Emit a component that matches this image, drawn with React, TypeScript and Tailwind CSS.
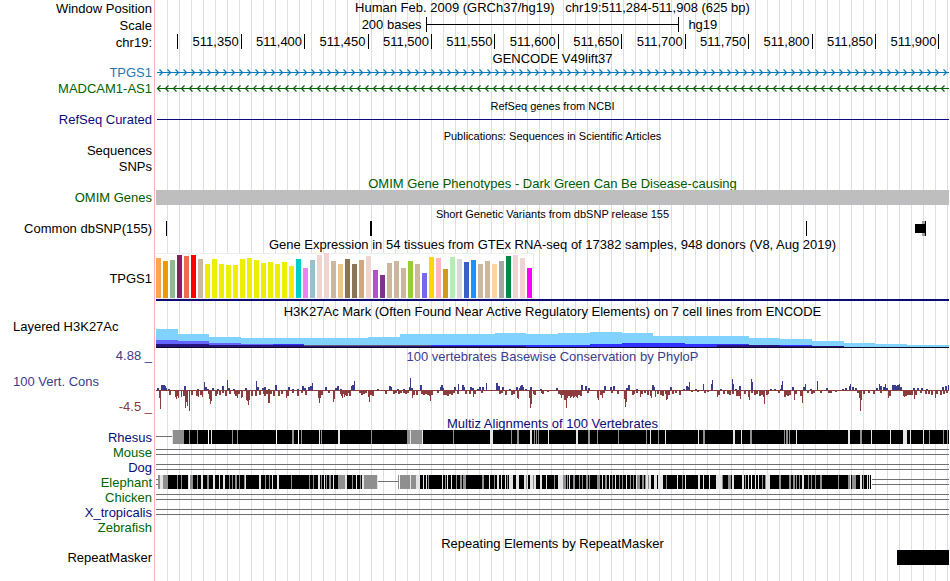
import type { ReactNode } from "react";
import { clsx } from "clsx";

type Span = [x: number, width: number, shade: "g" | "l" | "w"];

// Genome-wide drawing space: 625 bases laid over 793 units
const LANE_WIDTH = 793;

const RULER_TICKS = [
  "511,350", "511,400", "511,450", "511,500", "511,550", "511,600",
  "511,650", "511,700", "511,750", "511,800", "511,850", "511,900",
];

const TAN = "#cdb79e";
const ROSE = "#eed5d2";
const YELLOW = "#eeee00";

const TISSUE_HEIGHTS = [
  40, 37, 38, 43, 42, 43, 39, 34, 39, 34, 33, 33, 39, 40, 38, 35, 36, 34,
  36, 32, 39, 30, 38, 43, 45, 37, 34, 39, 34, 38, 42, 28, 23, 35, 37, 30,
  37, 34, 25, 41, 40, 29, 41, 39, 36, 38, 34, 37, 34, 37, 42, 43, 40, 30,
];

const TISSUE_COLORS = [
  "#ffa54f", "#ee9a00", "#8fbc8f", "#8b1c62", "#ee6a50", "#ff0000", TAN,
  YELLOW, YELLOW, YELLOW, YELLOW, YELLOW, YELLOW, YELLOW, YELLOW, YELLOW,
  YELLOW, YELLOW, YELLOW, YELLOW, "#00cdcd", "#ee82ee", "#9ac0cd", ROSE,
  ROSE, TAN, "#eec591", "#8b7355", "#8b7355", "#cdaa7d", ROSE, "#b452cd",
  "#7a378b", TAN, TAN, TAN, "#9acd32", TAN, "#7a67ee", "#ffd700", "#ffb6c1",
  "#cd9b1d", "#b4eeb4", "#d9d9d9", "#3a5fcd", "#1e90ff", TAN, TAN, "#ffd39b",
  "#a6a6a6", "#008b45", ROSE, ROSE, "#ff00ff",
];

// [start, height] steps, each one running up to the next start
const H3K_SKY = [
  [0, 19], [22, 14], [53, 11], [85, 10], [212, 11], [244, 14], [339, 15],
  [370, 14], [402, 15], [434, 16], [466, 15], [497, 12], [593, 10], [624, 9],
  [656, 7], [688, 5], [719, 4], [751, 3],
];
const H3K_VIOLET = [[0, 8], [22, 7], [53, 5], [85, 4], [117, 4], [148, 0]];
const H3K_BLUE = [
  [0, 0], [117, 4], [148, 3], [180, 0], [275, 3], [370, 3], [434, 4],
  [466, 5], [529, 4], [593, 3], [656, 0],
];
const H3K_DARK = [
  [0, 4], [53, 3], [148, 2], [370, 1], [561, 3], [624, 2], [688, 1],
];

// [position, score in px], positive scores rise above the axis
const CONSERVATION = [
  [1, 2], [5, 5], [6, 5], [7, 5], [8, 4], [9, 2], [12, 1], [28, 4], [41, 1],
  [48, 8], [49, 3], [51, 1], [56, 2], [61, 1], [66, 4], [71, 10], [72, 2],
  [77, 1], [89, 2], [100, 9], [101, 3], [106, 2], [108, 3], [112, 1], [119, 5],
  [132, 3], [136, 1], [141, 1], [146, 4], [148, 2], [152, 3], [154, 4],
  [155, 3], [156, 7], [169, 3], [179, 2], [181, 4], [184, 1], [195, 4],
  [196, 5], [198, 9], [221, 1], [233, 4], [234, 3], [241, 1], [247, 1],
  [253, 3], [254, 12], [255, 2], [264, 5], [284, 3], [285, 5], [286, 2],
  [298, 3], [302, 6], [306, 5], [307, 3], [314, 3], [316, 2], [321, 1],
  [323, 3], [326, 3], [330, 7], [340, 7], [341, 7], [342, 4], [346, 3],
  [353, 1], [360, 3], [363, 2], [364, 4], [365, 5], [366, 3], [369, 1],
  [374, 3], [384, 1], [400, 2], [425, 5], [429, 4], [432, 2], [448, 4],
  [454, 3], [457, 4], [470, 2], [472, 5], [480, 1], [496, 5], [497, 3],
  [514, 3], [527, 1], [530, 4], [531, 3], [533, 8], [539, 1], [547, 6],
  [555, 6], [556, 10], [564, 1], [576, 11], [577, 6], [579, 1], [583, 4],
  [595, 11], [596, 8], [614, 1], [618, 1], [624, 1], [625, 5], [626, 9],
  [636, 3], [647, 3], [649, 6], [654, 1], [661, 9], [670, 2], [686, 1],
  [689, 2], [693, 4], [694, 6], [696, 3], [699, 2], [720, 2], [723, 6],
  [724, 4], [727, 3], [729, 6], [730, 2], [736, 5], [737, 5], [738, 5],
  [740, 4], [741, 5], [742, 5], [743, 6], [744, 3], [757, 2], [761, 2],
  [765, 2], [770, 1], [786, 3], [789, 4], [792, 5],
  [3, -8], [4, -19], [13, -5], [19, -7], [20, -9], [21, -6], [22, -8],
  [25, -7], [27, -6], [29, -18], [30, -12], [31, -16], [33, -21], [35, -5],
  [40, -6], [42, -7], [44, -5], [46, -7], [52, -4], [53, -9], [54, -14],
  [55, -11], [59, -6], [60, -4], [63, -5], [66, -3], [69, -6], [73, -4],
  [78, -4], [79, -6], [80, -5], [81, -8], [82, -4], [85, -8], [86, -7],
  [90, -10], [91, -11], [92, -15], [93, -10], [95, -6], [99, -6], [103, -5],
  [107, -4], [108, -6], [110, -4], [112, -13], [113, -13], [114, -4],
  [117, -6], [122, -6], [125, -4], [130, -8], [131, -6], [136, -3], [141, -6],
  [145, -3], [149, -5], [162, -8], [163, -13], [164, -8], [165, -5],
  [172, -3], [177, -12], [178, -9], [184, -4], [185, -6], [186, -8], [187, -4],
  [188, -7], [189, -5], [190, -6], [192, -3], [193, -6], [203, -3], [205, -5],
  [207, -4], [209, -3], [212, -7], [213, -12], [214, -5], [216, -6],
  [229, -4], [237, -4], [239, -3], [242, -4], [244, -3], [247, -3], [249, -4],
  [251, -3], [256, -8], [257, -5], [260, -5], [265, -4], [267, -5], [269, -4],
  [271, -5], [273, -6], [274, -11], [275, -5], [281, -3], [287, -5],
  [289, -5], [291, -6], [293, -4], [295, -5], [297, -3], [301, -4],
  [309, -4], [313, -4], [317, -7], [318, -4], [325, -3], [343, -4],
  [345, -3], [349, -5], [355, -5], [357, -4], [361, -8], [362, -9],
  [373, -8], [374, -18], [375, -14], [377, -4], [378, -5], [385, -3],
  [386, -4], [391, -2], [402, -4], [404, -5], [405, -8], [406, -5],
  [408, -10], [409, -10], [410, -18], [411, -8], [412, -6], [414, -8],
  [415, -7], [416, -6], [417, -8], [418, -7], [419, -6], [420, -7],
  [421, -8], [422, -5], [424, -6], [431, -3], [441, -8], [442, -10],
  [444, -5], [446, -8], [447, -3], [455, -3], [461, -4], [468, -9],
  [469, -17], [470, -12], [476, -5], [477, -4], [480, -3], [484, -7],
  [485, -4], [488, -3], [491, -5], [494, -6], [495, -8], [499, -7],
  [501, -4], [504, -5], [506, -6], [509, -4], [510, -10], [511, -9],
  [512, -5], [516, -4], [519, -3], [523, -5], [535, -2], [541, -2],
  [548, -3], [551, -2], [561, -7], [562, -5], [567, -4], [571, -4],
  [573, -5], [576, -4], [580, -6], [582, -6], [584, -9], [588, -4],
  [592, -7], [593, -10], [595, -3], [598, -5], [600, -4], [603, -6],
  [605, -5], [607, -7], [608, -14], [610, -5], [611, -4], [622, -3],
  [628, -7], [629, -7], [630, -5], [631, -6], [633, -5], [638, -10],
  [639, -4], [644, -6], [646, -13], [651, -3], [655, -4], [657, -3],
  [664, -3], [672, -3], [674, -3], [679, -2], [701, -3], [703, -8],
  [704, -21], [705, -10], [707, -4], [712, -3], [717, -4], [724, -3],
  [732, -8], [733, -6], [747, -6], [748, -7], [749, -6], [750, -5],
  [751, -5], [752, -4], [753, -5], [754, -4], [755, -5], [758, -9],
  [759, -5], [764, -3], [769, -4], [772, -4], [775, -5], [779, -8],
  [780, -4], [784, -5], [787, -4], [790, -3],
];

const RHESUS: Span[] = [
  [16, 1, "l"], [17, 11, "g"], [33, 1, "g"], [41, 1, "g"], [52, 1, "w"],
  [55, 1, "l"], [76, 1, "g"], [81, 1, "g"], [120, 1, "w"], [136, 2, "g"],
  [142, 1, "w"], [145, 1, "g"], [163, 1, "l"], [165, 1, "g"], [182, 2, "l"],
  [215, 1, "g"], [251, 3, "g"], [254, 1, "l"], [255, 11, "g"], [266, 1, "l"],
  [297, 1, "g"], [334, 3, "l"], [355, 1, "g"], [361, 2, "g"], [374, 2, "l"],
  [378, 1, "g"], [380, 1, "g"], [382, 1, "g"], [392, 1, "l"], [420, 2, "l"],
  [432, 2, "g"], [441, 1, "g"], [462, 1, "g"], [490, 1, "g"], [494, 1, "l"],
  [502, 1, "g"], [509, 1, "l"], [542, 1, "l"], [547, 2, "g"], [577, 2, "l"],
  [585, 1, "l"], [594, 2, "g"], [628, 1, "g"], [630, 2, "g"], [633, 1, "g"],
  [640, 1, "l"], [692, 2, "l"], [704, 2, "g"], [715, 1, "l"], [734, 1, "l"],
  [747, 4, "l"], [754, 1, "l"], [767, 1, "l"], [773, 1, "g"], [787, 1, "g"],
  [791, 1, "g"],
];

const ELEPHANT: Span[] = [
  [2, 2, "g"], [4, 3, "l"], [7, 5, "g"], [21, 1, "g"], [25, 1, "g"],
  [32, 1, "l"], [33, 1, "w"], [34, 3, "g"], [41, 1, "g"], [45, 2, "l"],
  [51, 2, "g"], [57, 2, "l"], [63, 1, "l"], [67, 2, "l"], [73, 1, "g"],
  [76, 1, "g"], [79, 2, "g"], [83, 1, "g"], [88, 1, "g"], [89, 1, "l"],
  [103, 2, "l"], [109, 1, "g"], [113, 1, "g"], [116, 1, "l"], [121, 2, "l"],
  [135, 1, "g"], [153, 1, "g"], [157, 1, "g"], [162, 2, "l"], [165, 1, "g"],
  [168, 1, "l"], [170, 1, "g"], [173, 2, "g"], [177, 1, "l"], [182, 7, "g"],
  [189, 2, "l"], [196, 1, "g"], [200, 1, "l"], [204, 1, "g"], [206, 2, "l"],
  [208, 13, "g"], [221, 1, "l"], [242, 1, "g"], [244, 10, "g"], [254, 1, "l"],
  [255, 5, "g"], [260, 4, "l"], [267, 1, "l"], [270, 1, "l"], [272, 1, "g"],
  [286, 1, "l"], [289, 1, "g"], [291, 1, "l"], [295, 1, "l"], [300, 1, "g"],
  [304, 2, "g"], [307, 3, "g"], [326, 2, "g"], [333, 1, "l"], [338, 1, "g"],
  [341, 2, "l"], [345, 1, "l"], [349, 1, "l"], [351, 1, "g"], [353, 4, "l"],
  [360, 3, "l"], [368, 2, "l"], [370, 1, "g"], [371, 1, "l"], [374, 3, "l"],
  [377, 1, "g"], [378, 2, "l"], [384, 2, "l"], [390, 1, "l"], [398, 1, "g"],
  [402, 5, "l"], [407, 3, "g"], [411, 1, "g"], [413, 1, "l"], [417, 2, "g"],
  [423, 1, "g"], [426, 1, "g"], [430, 2, "g"], [433, 1, "g"], [441, 3, "g"],
  [446, 1, "l"], [449, 2, "g"], [453, 1, "l"], [456, 1, "g"], [459, 1, "l"],
  [463, 1, "g"], [466, 1, "g"], [470, 1, "l"], [474, 1, "g"], [477, 1, "g"],
  [480, 1, "l"], [481, 3, "g"], [486, 2, "g"], [489, 1, "g"], [490, 2, "l"],
  [492, 1, "g"], [493, 2, "l"], [498, 3, "l"], [502, 5, "l"], [510, 1, "g"],
  [521, 1, "l"], [526, 1, "g"], [529, 1, "l"], [542, 2, "l"], [547, 1, "l"],
  [553, 1, "l"], [560, 6, "l"], [566, 1, "g"], [572, 3, "g"], [576, 2, "l"],
  [586, 2, "l"], [589, 1, "g"], [592, 1, "l"], [595, 1, "w"], [599, 1, "l"],
  [602, 1, "l"], [606, 1, "g"], [609, 1, "g"], [610, 4, "l"], [623, 2, "g"],
  [633, 2, "g"], [637, 2, "g"], [640, 1, "g"], [643, 1, "g"], [646, 2, "l"],
  [652, 1, "g"], [655, 1, "g"], [659, 1, "g"], [664, 2, "g"], [682, 1, "g"],
  [692, 2, "g"], [694, 1, "l"], [696, 4, "g"], [704, 2, "l"], [707, 1, "g"],
  [711, 1, "l"], [713, 1, "l"],
];

const SHADES = { g: "#8f8f8f", l: "#e4e4e4", w: "#ffffff" };

function Row({
  label,
  labelClass,
  className,
  children,
}: {
  label?: ReactNode;
  labelClass?: string;
  className?: string;
  children?: ReactNode;
}) {
  return (
    <div className={clsx("flex", className)}>
      <div
        className={clsx(
          "flex w-[155px] shrink-0 items-center justify-end whitespace-pre border-r border-[#ffb0b0] pr-[2px]",
          labelClass,
        )}
      >
        {label}
      </div>
      <div className="ml-px min-w-0 flex-1 bg-[linear-gradient(to_right,#dcdcf5_1px,transparent_1px)] bg-[length:12px_100%] bg-[position:11px_0]">
        {children}
      </div>
    </div>
  );
}

function Title({
  children,
  small,
  className,
}: {
  children: ReactNode;
  small?: boolean;
  className?: string;
}) {
  return (
    <h2
      className={clsx(
        "whitespace-pre text-center leading-[18px]",
        small && "text-[11px]",
        className,
      )}
    >
      {children}
    </h2>
  );
}

function Lane({ height, children }: { height: number; children: ReactNode }) {
  return (
    <svg
      className="block w-full"
      height={height}
      viewBox={`0 0 ${LANE_WIDTH} ${height}`}
      preserveAspectRatio="none"
      shapeRendering="crispEdges"
      aria-hidden="true"
    >
      {children}
    </svg>
  );
}

function Strand({ color, reverse }: { color: string; reverse?: boolean }) {
  const chevrons = Array.from({ length: 99 }, (_, i) =>
    reverse ? `M${i * 8 + 4.5} 4.5l-3 3l3 3` : `M${i * 8 + 3.5} 4.5l3 3l-3 3`,
  ).join("");

  return (
    <Lane height={16}>
      <rect x="1" y="7" width="792" height="1" fill={color} />
      <path
        d={chevrons}
        fill="none"
        stroke={color}
        strokeWidth="1.2"
        shapeRendering="auto"
      />
    </Lane>
  );
}

function stepPath(steps: number[][], bottom: number) {
  return steps
    .map(([x, h], i) => {
      const end = steps[i + 1]?.[0] ?? LANE_WIDTH;
      return `M${x} ${bottom}V${bottom - h}H${end}V${bottom}z`;
    })
    .join("");
}

function GtexBars() {
  return (
    <Lane height={50}>
      <rect x="0" y="0" width="378" height="46" fill="#eeeeee" />
      <rect x="0" y="1" width="377" height="44" fill="#ffffff" />
      {TISSUE_HEIGHTS.map((h, i) => (
        <rect
          key={i}
          x={i * 7}
          y={45 - h}
          width="5"
          height={h}
          fill={TISSUE_COLORS[i]}
        />
      ))}
      <rect x="0" y="46" width={LANE_WIDTH} height="2" fill="#0c0c78" />
    </Lane>
  );
}

function Conservation() {
  return (
    <Lane height={52}>
      <rect x="0" y="27" width={LANE_WIDTH} height="1" fill="#8c3c3c" />
      {CONSERVATION.map(([x, score], i) => (
        <rect
          key={i}
          x={x}
          y={score > 0 ? 27 - score : 27}
          width={score < 6 && score > -7 ? 2 : 1}
          height={Math.abs(score)}
          fill={score > 0 ? "#3c3c8c" : "#8c3c3c"}
        />
      ))}
    </Lane>
  );
}

function DoubleLine({ x = 0, width = LANE_WIDTH }) {
  return (
    <>
      <rect x={x} y="4" width={width} height="1" fill="#707070" />
      <rect x={x} y="9" width={width} height="1" fill="#707070" />
    </>
  );
}

function Spans({ spans }: { spans: Span[] }) {
  return spans.map(([x, width, shade], i) => (
    <rect key={i} x={x} y="0" width={width} height="14" fill={SHADES[shade]} />
  ));
}

export default function App() {
  return (
    <main className="flex min-h-screen flex-col bg-white pr-px font-['Liberation_Sans',Arial,sans-serif] text-[13px] leading-[15px] text-black">
      <Row label="Window Position" className="h-[17px]">
        <h1 className="whitespace-pre text-center">
          {"Human Feb. 2009 (GRCh37/hg19)   chr19:511,284-511,908 (625 bp)"}
        </h1>
      </Row>
      <Row label="Scale" className="h-[17px]">
        <div className="grid grid-cols-[1fr_32%_1fr]">
          <span className="pr-1 text-right">200 bases</span>
          <div className="flex items-center border-x border-black">
            <div className="h-px w-full bg-black" />
          </div>
          <span className="pl-[9px]">hg19</span>
        </div>
      </Row>
      <Row label="chr19:" className="h-4">
        <div className="flex">
          <div className="w-[2.8%] border-r border-black" />
          {RULER_TICKS.map((tick) => (
            <div
              key={tick}
              className="h-[15px] w-[8%] border-r border-black pr-[2px] text-right"
            >
              {tick}
            </div>
          ))}
        </div>
      </Row>

      <Row className="h-[15px]">
        <Title>GENCODE V49lift37</Title>
      </Row>
      <Row
        label="TPGS1"
        labelClass="items-start text-[#1e78b4]"
        className="h-4"
      >
        <Strand color="#0c78b4" />
      </Row>
      <Row
        label="MADCAM1-AS1"
        labelClass="items-start text-[#006400]"
        className="h-4"
      >
        <Strand color="#006400" reverse />
      </Row>

      <Row className="h-[15px]">
        <Title small>RefSeq genes from NCBI</Title>
      </Row>
      <Row label="RefSeq Curated" labelClass="text-[#0c0c78]" className="h-[15px]">
        <Lane height={15}>
          <rect x="1" y="7" width="792" height="1" fill="#0c0c78" />
        </Lane>
      </Row>

      <Row className="h-4">
        <Title small>Publications: Sequences in Scientific Articles</Title>
      </Row>
      <Row label="Sequences" labelClass="items-start" className="h-4" />
      <Row label="SNPs" labelClass="items-start" className="h-4" />

      <Row className="h-[15px]">
        <Title className="text-[#005a00]">
          OMIM Gene Phenotypes - Dark Green Can Be Disease-causing
        </Title>
      </Row>
      <Row label="OMIM Genes" labelClass="text-[#005a00]" className="h-[15px]">
        <Lane height={15}>
          <rect x="0" y="0" width={LANE_WIDTH} height="15" fill="#bebebe" />
        </Lane>
      </Row>

      <Row className="h-4">
        <Title small>Short Genetic Variants from dbSNP release 155</Title>
      </Row>
      <Row label="Common dbSNP(155)" className="h-[15px]">
        <Lane height={15}>
          <rect x="10" y="0" width="1" height="15" />
          <rect x="214" y="0" width="2" height="15" />
          <rect x="650" y="0" width="1" height="15" />
          <rect x="766" y="0" width="3" height="15" fill="#a0a0a0" />
          <rect x="759" y="3" width="10" height="9" />
          <rect x="769" y="0" width="1" height="15" />
        </Lane>
      </Row>

      <Row className="h-[17px]">
        <Title>
          Gene Expression in 54 tissues from GTEx RNA-seq of 17382 samples, 948
          donors (V8, Aug 2019)
        </Title>
      </Row>
      <Row label="TPGS1" className="h-[50px]">
        <GtexBars />
      </Row>

      <Row className="h-4">
        <Title>
          H3K27Ac Mark (Often Found Near Active Regulatory Elements) on 7 cell
          lines from ENCODE
        </Title>
      </Row>
      <Row
        label={<span className="w-full self-start pl-[13px]">Layered H3K27Ac</span>}
        className="h-[29px]"
      >
        <Lane height={29}>
          <path d={stepPath(H3K_SKY, 29)} fill="#82d2ff" />
          <path d={stepPath(H3K_VIOLET, 29)} fill="#6464ff" />
          <path d={stepPath(H3K_BLUE, 29)} fill="#3232ff" />
          <path d={stepPath(H3K_DARK, 29)} fill="#28147d" />
          <rect x="148" y="26" width="127" height="1" fill="#645078" />
          <rect x="0" y="28" width={LANE_WIDTH} height="1" fill="#0a0a28" />
        </Lane>
      </Row>

      <Row
        label={<span className="leading-[18px]">4.88 _</span>}
        labelClass="text-[#3c3c8c]"
        className="h-[15px]"
      >
        <Title className="text-[#3c3c8c]">
          100 vertebrates Basewise Conservation by PhyloP
        </Title>
      </Row>
      <Row
        label={
          <div className="flex w-full flex-col gap-[10px] pl-[13px] pt-[10px]">
            <span className="text-[#3c3c8c]">100 Vert. Cons</span>
            <span className="text-right text-[#8c3c3c]">-4.5 _</span>
          </div>
        }
        className="h-[52px]"
      >
        <Conservation />
      </Row>

      <Row className="h-[15px]">
        <Title className="text-[#0c0c78]">
          Multiz Alignments of 100 Vertebrates
        </Title>
      </Row>
      <Row label="Rhesus" labelClass="text-[#0c0c78]" className="h-[15px]">
        <Lane height={15}>
          <rect x="0" y="6" width="16" height="1" fill="#707070" />
          <rect x="28" y="0" width="765" height="14" />
          <Spans spans={RHESUS} />
        </Lane>
      </Row>
      <Row label="Mouse" labelClass="text-[#006400]" className="h-[15px]">
        <Lane height={15}>
          <DoubleLine />
        </Lane>
      </Row>
      <Row label="Dog" labelClass="text-[#0c0c78]" className="h-[15px]">
        <Lane height={15}>
          <DoubleLine />
        </Lane>
      </Row>
      <Row label="Elephant" labelClass="text-[#006400]" className="h-[15px]">
        <Lane height={15}>
          <DoubleLine width={2} />
          <rect x="12" y="0" width="196" height="14" />
          <rect x="222" y="6" width="20" height="1" fill="#707070" />
          <rect x="264" y="0" width="451" height="14" />
          <Spans spans={ELEPHANT} />
          <DoubleLine x={716} width={77} />
        </Lane>
      </Row>
      <Row label="Chicken" labelClass="text-[#006400]" className="h-[15px]">
        <Lane height={15}>
          <DoubleLine />
        </Lane>
      </Row>
      <Row label="X_tropicalis" labelClass="text-[#0c0c78]" className="h-[15px]">
        <Lane height={15}>
          <DoubleLine />
        </Lane>
      </Row>
      <Row label="Zebrafish" labelClass="text-[#006400]" className="h-[15px]" />

      <Row className="h-[15px]">
        <Title>Repeating Elements by RepeatMasker</Title>
      </Row>
      <Row label="RepeatMasker" className="h-[15px]">
        <Lane height={15}>
          <rect x="741" y="0" width="52" height="15" />
        </Lane>
      </Row>
      <Row className="grow" />
    </main>
  );
}
